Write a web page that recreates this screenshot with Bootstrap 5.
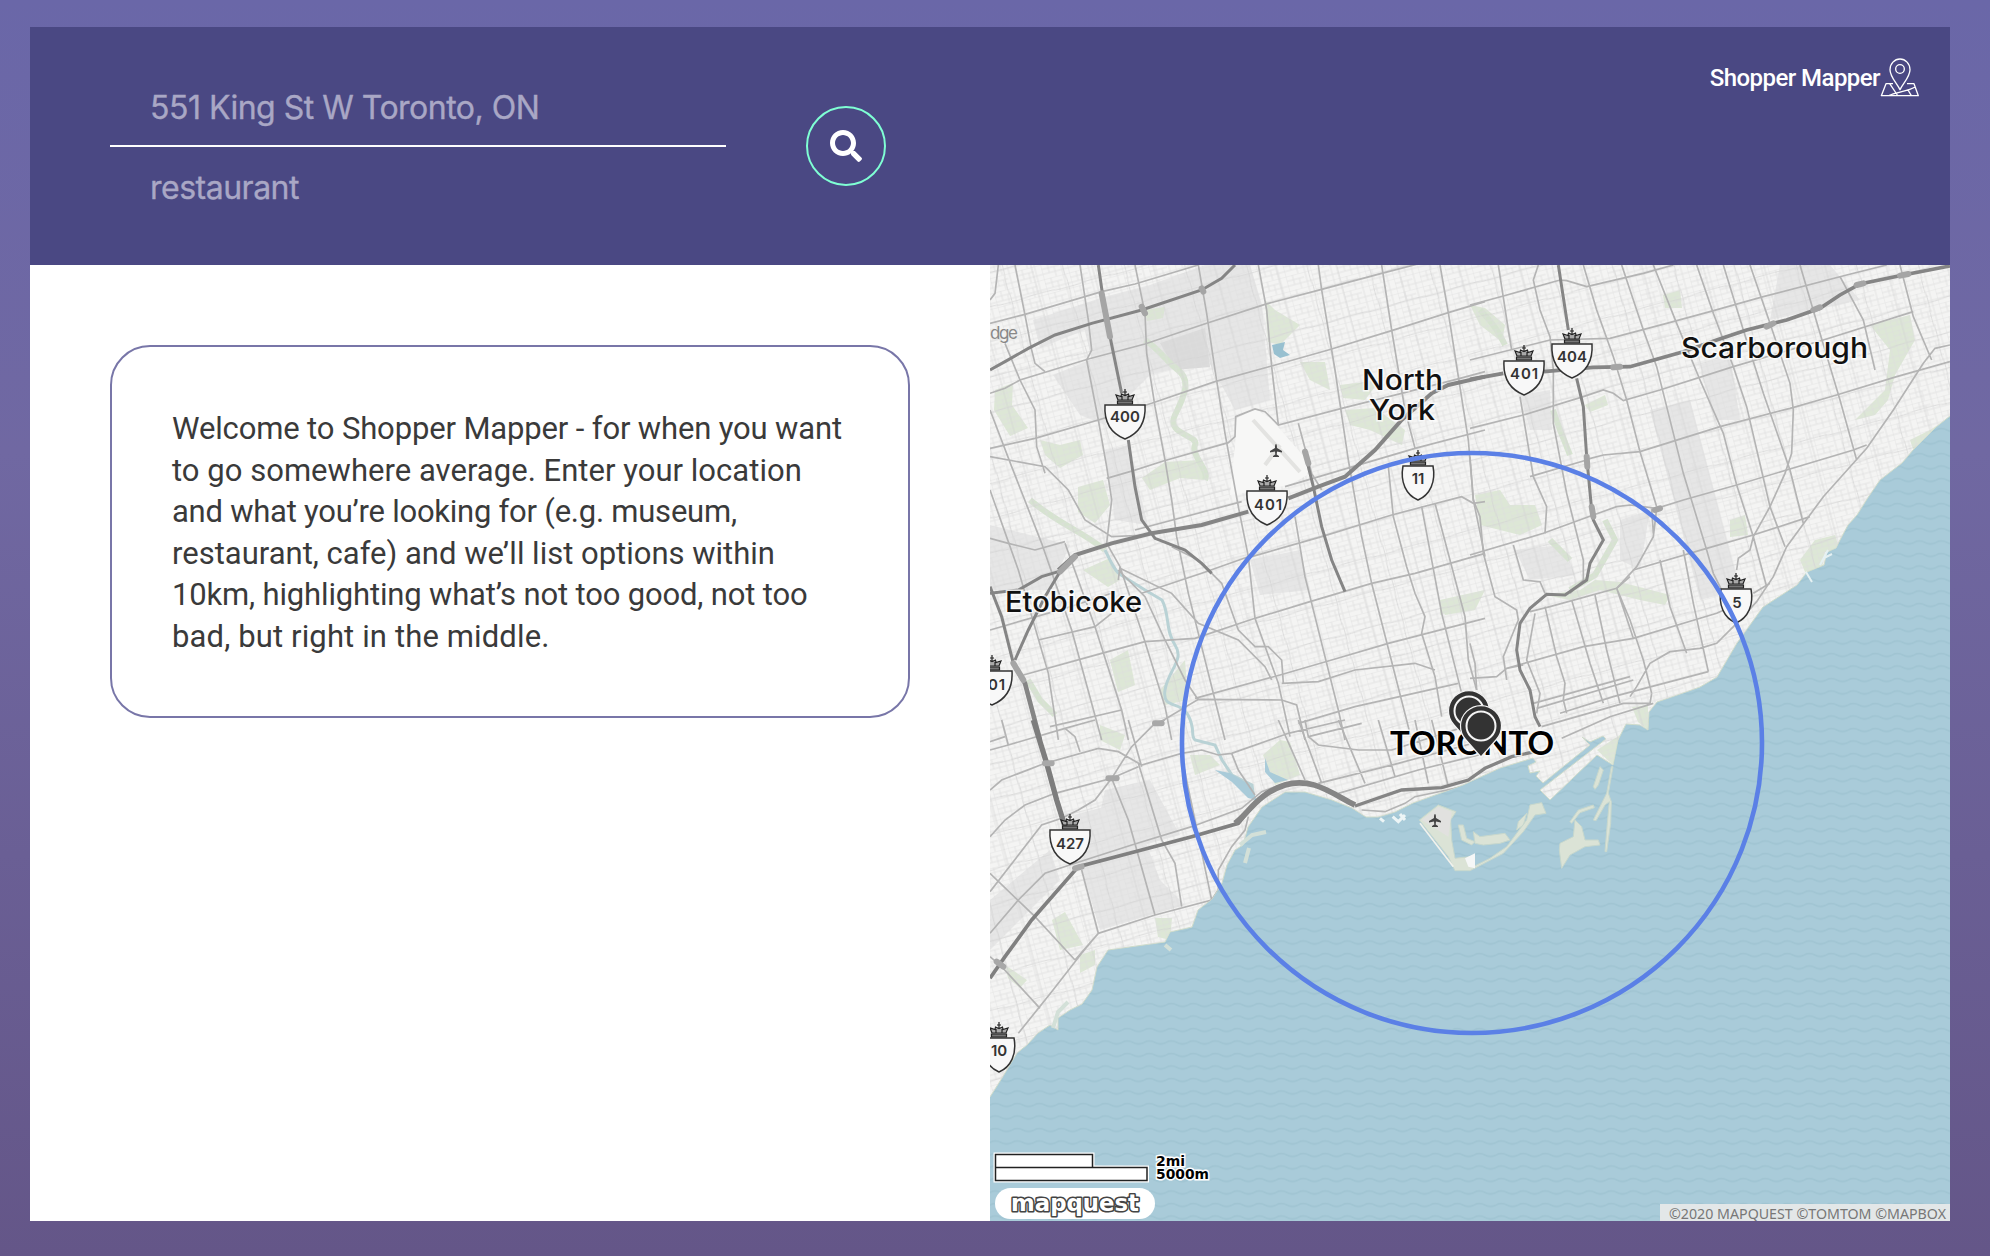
<!DOCTYPE html>
<html lang="en">
<head>
<meta charset="utf-8">
<title>Shopper Mapper</title>
<link href="https://cdn.jsdelivr.net/npm/bootstrap@5.3.0/dist/css/bootstrap.min.css" rel="stylesheet">
<style>
body{min-height:1256px;margin:0;background:linear-gradient(#6a67a8 0%,#7068a2 36%,#645688 100%);overflow:hidden;font-family:Roboto,"Liberation Sans",sans-serif}
.shell{margin:27px 40px 35px 30px;height:1194px;background:#fff}
.topbar{height:238px;background:#4a4883;padding:40px 30px 0 80px}
.fields{width:616px}
.fields .form-control{height:80px;border:0;border-radius:0;background:transparent;color:#fff;font:400 32px/1.2 Inter,sans-serif;letter-spacing:-.5px;padding:0 40px;-webkit-text-stroke:.35px #a9a7c5}
.fields .form-control::placeholder{color:#a9a7c5;opacity:1}
.fields .rule-line{border-bottom:2px solid #fff;padding-top:2px}
.find{width:80px;height:80px;margin:39px 0 0 80px;border:2px solid #7fffd4;border-radius:50%;background:transparent}
.brand{color:#fff;font-size:24px;font-weight:500;line-height:36px;margin-top:-10px}
.brand span{letter-spacing:-.55px;white-space:nowrap}
.pane{width:960px;height:956px}
.welcome{margin:80px 80px 0;height:373px;border:2px solid #7876a8;border-radius:40px;padding:61px 60px 59px}
.welcome p{margin:0;color:#3a3a3a;font-size:31px;line-height:41.6px;white-space:nowrap}
.welcome span{display:block}
.l1{letter-spacing:-.14px}.l2{letter-spacing:.03px}.l3{letter-spacing:-.24px}.l5{letter-spacing:-.16px}.l6{letter-spacing:.13px}
.mapart{display:block}
</style>
</head>
<body>
<main class="shell d-flex flex-column">
<header class="topbar d-flex align-items-start">
  <form class="fields d-flex flex-column">
    <input class="form-control rule-line" type="text" placeholder="551 King St W Toronto, ON" aria-label="Location">
    <input class="form-control" type="text" placeholder="restaurant" aria-label="Search">
  </form>
  <button class="find btn p-0 d-flex align-items-center justify-content-center" type="button" aria-label="Search">
    <svg width="32" height="32" viewBox="0 0 512 512" fill="#fff"><path d="M505 442.700 405.300 343c-4.500-4.500-10.600-7-17-7H372c27.600-35.300 44-79.700 44-128C416 93.100 322.900 0 208 0S0 93.100 0 208s93.100 208 208 208c48.300 0 92.700-16.400 128-44v16.300c0 6.400 2.500 12.500 7 17l99.700 99.700c9.400 9.400 24.600 9.400 33.900 0l28.300-28.300c9.400-9.400 9.400-24.600.1-34zM208 336c-70.700 0-128-57.200-128-128 0-70.700 57.200-128 128-128 70.700 0 128 57.200 128 128 0 70.700-57.200 128-128 128z"/></svg>
  </button>
  <div class="brand d-flex align-items-center ms-auto">
    <span>Shopper Mapper</span>
    <svg width="40" height="42" viewBox="0 0 120 126" fill="none" stroke="#fff" stroke-width="4" stroke-linejoin="round"><path d="M60 98C52 80 30 60 30 38a30 32 0 0 1 60 0c0 22-22 42-30 60Z"/><circle cx="60" cy="36" r="13"/><path d="M39 80H18L4 116H115L102 80H81M29 80l23 34M28 115C45 106 88 102 106 89M84 99l10 17"/></svg>
  </div>
</header>
<section class="d-flex">
<div class="pane">
  <div class="welcome"><p>
    <span class="l1">Welcome to Shopper Mapper - for when you want</span>
    <span class="l2">to go somewhere average. Enter your location</span>
    <span class="l3">and what you’re looking for (e.g. museum,</span>
    <span class="l4">restaurant, cafe) and we’ll list options within</span>
    <span class="l5">10km, highlighting what’s not too good, not too</span>
    <span class="l6">bad, but right in the middle.</span>
  </p></div>
</div>
<div class="pane">
<svg class="mapart" width="960" height="956" viewBox="990 265 960 956">
<defs>
<pattern id="waves" width="22" height="12.500" patternUnits="userSpaceOnUse"><path d="M0 5Q5.500 2 11 5T22 5" fill="none" stroke="#a0c4d2" stroke-width="1.700"/></pattern>
<pattern id="blocks" width="26" height="15" patternUnits="userSpaceOnUse" patternTransform="rotate(-15)"><path d="M0 0H26M0 5H18M0 10H26M0 0V15M7 0V10M13 5V15M20 0V15" fill="none" stroke="#dedede" stroke-width=".9"/></pattern>
<pattern id="lanes" width="59" height="34" patternUnits="userSpaceOnUse" patternTransform="rotate(-15)"><path d="M0 9C18 12 36 6 59 9M14 0C16 12 12 22 14 34M42 0V34" fill="none" stroke="#d2d2d2" stroke-width=".9"/></pattern>
<clipPath id="ground"><use href="#coast"/></clipPath>
<g id="crown"><path d="M-7.500 -20H7.500V-23H-7.500Z" fill="#777" stroke="#222" stroke-width="1.200"/><path d="M-7-24L-9-29L-4-27.500L-3.500-30L0-28.500L3.500-30L4-27.500L9-29L7-24ZM0-29V-35M-2-32H2M-3-24V-28M3-24V-28" fill="#aaa" stroke="#222" stroke-width="1.200"/></g>
<g id="shield"><use href="#crown"/><path d="M-20-19H20C21-3 15 9 0 15C-15 9-21-3-20-19Z" fill="#f8f8f8" stroke="#333" stroke-width="1.500"/></g>
<g id="shield-s"><use href="#crown"/><path d="M-15-19H15C18-3 12 10 0 15C-12 10-18-3-15-19Z" fill="#f8f8f8" stroke="#333" stroke-width="1.500"/></g>
<path id="plane" d="M0-6C1-6 1-3 1-2L6 1V2.500L1 1.500L.7 4.500L3 6V7H-3V6L-.7 4.500L-1 1.500L-6 2.500V1L-1-2C-1-3-1-6 0-6Z" fill="#444"/>
<g id="pin"><path d="M0 31L-15 14A20.500 20.500 0 1 1 15 14Z" fill="#333" stroke="#f5f5f5" stroke-width="1.200"/><circle r="14.500" fill="#333" stroke="#f5f5f5" stroke-width="2"/></g>
</defs>
<rect x="990" y="265" width="960" height="956" fill="#a9cbd9"/>
<rect x="990" y="265" width="960" height="956" fill="url(#waves)"/>
<path id="coast" fill="#f4f4f3" stroke="#cfdcc9" stroke-width="1" d="M980 255H1960V408L1950 416L1936 427L1913 450L1902 463L1880 480L1867 499L1857 515L1848 525L1840 540L1836 548L1827 552L1824 565L1807 572L1797 585L1763 607L1750 625L1737 643L1717 677L1700 687L1683 693L1657 702L1649 712L1648 730L1640 725L1626 724L1618 740L1613 765L1597 755L1550 800L1540 790L1606 739L1603 736L1590 742L1582 737L1590 745L1543 783L1536 776L1540 771L1530 773L1528 766L1536 762L1533 758L1500 768L1463 785L1413 803L1395 812L1378 817L1366 817L1352 808L1332 800L1305 792L1285 792L1262 807L1248 827L1243 845L1235 850L1227 865L1222 883L1212 899L1198 910L1192 927L1170 932L1165 942L1108 950L1097 967L1092 990L1082 1004L1070 1010L1058 1018L1058 1030L1050 1025L1038 1033L1027 1045L1017 1053L1002 1078L990 1097L980 1100Z"/>
<g clip-path="url(#ground)">
<g fill="#e6e6e6">
<path d="M1033 320L1104 297L1150 285L1205 265H1250L1262 305L1270 400L1235 410L1208 360L1150 375L1105 420L1085 330L1040 348ZM1053 375L1095 358L1105 425L1080 415ZM1105 450L1128 445L1148 525L1115 520ZM990 525L1070 545L1050 590L990 590ZM1075 815L1130 800L1160 880L1185 905L1100 930L1082 870L1060 860ZM1105 790L1150 780L1180 835L1090 860ZM1250 560L1300 550L1310 590L1260 595ZM1780 265L1830 265L1860 300L1770 320ZM1650 410L1690 400L1740 590L1700 600ZM1700 365L1730 355L1740 420L1715 420ZM1515 550L1560 545L1575 575L1530 580ZM1520 395L1550 390L1552 430L1530 430ZM1620 520L1650 510L1640 570L1620 560ZM990 900L1050 850L1060 880L990 950Z"/>
</g>
<path d="M1160 343L1205 328L1210 367L1175 370Z" fill="#dadada"/>
<g fill="#d8e4d0" opacity=".85">
<path d="M995 390L1013 383L1012 405L1028 428L1010 436L994 410ZM1040 440L1060 445L1080 440L1083 455L1060 468L1045 455ZM1078 487L1103 480L1110 505L1095 523L1078 512ZM1142 478L1165 462L1200 460L1204 480L1180 478L1150 490ZM1083 570L1110 558L1120 580L1108 587ZM1110 660L1128 650L1135 685L1118 692ZM1265 300L1275 310L1300 325L1280 345L1268 342ZM1300 362L1325 362L1330 390L1310 380ZM1340 385L1380 380L1365 400L1343 398ZM1345 410L1375 408L1405 430L1402 445L1370 430L1350 425ZM1280 740L1290 742L1300 775L1275 785L1263 755ZM1100 725L1125 735L1120 750L1100 740ZM1052 920L1065 912L1083 945L1060 950ZM1155 918L1172 918L1170 940L1158 937ZM1080 955L1095 950L1095 965L1080 973ZM1005 965L1027 980L1020 988L1008 978ZM1190 755L1210 755L1220 765L1195 775ZM1475 495L1500 490L1510 505L1535 505L1542 525L1520 535L1480 525ZM1470 305L1485 308L1505 325L1502 342L1480 325ZM1870 325L1910 315L1915 340L1895 375L1888 400L1875 415L1855 420L1885 390L1890 350ZM1663 295L1680 290L1682 308L1665 308ZM1730 520L1745 515L1748 535L1730 537ZM1800 560L1815 540L1835 535L1840 552L1825 552L1822 568L1805 572ZM1585 405L1605 395L1608 405L1590 412ZM1545 595L1580 590L1595 580L1620 582L1670 595L1665 605L1640 600L1600 590L1570 600ZM1440 600L1485 590L1480 600L1440 615ZM1910 440L1930 430L1950 417L1915 455ZM1632 707L1648 705L1648 730L1638 722ZM1597 750L1620 735L1613 765ZM1145 310L1165 307L1163 318L1147 321ZM1440 605L1485 590L1475 610L1445 615ZM1160 690L1185 660L1188 700L1165 705Z"/>
</g>
<path d="M1145 340C1160 350 1165 360 1178 370S1185 395 1175 415S1200 435 1195 445S1210 470 1205 480M1030 500C1060 525 1080 530 1105 550M1480 310C1495 325 1500 335 1505 345M1553 410L1560 430L1570 455M1605 520L1615 540L1595 575L1570 590M1550 540L1570 560M1028 680L1040 700L1055 715" fill="none" stroke="#d6e3d0" stroke-width="6"/>
<rect x="990" y="265" width="960" height="840" fill="url(#blocks)" opacity=".8"/>
<rect x="990" y="265" width="960" height="840" fill="url(#lanes)" opacity=".75"/>
<path d="M1272 345L1285 342L1283 350L1290 355L1280 358L1274 354Z" fill="#98c0d0"/>
<path d="M1105 550C1110 560 1115 572 1121 575L1145 590L1162 600C1170 615 1165 630 1175 645S1168 670 1165 690S1180 700 1188 715S1190 735 1195 740L1215 745L1222 760L1232 775L1252 785L1254 800" fill="none" stroke="#b9d2d5" stroke-width="3"/>
<path d="M1215 770L1230 773L1250 785L1257 800L1248 798L1232 782ZM1265 758L1270 772L1288 780L1275 783L1265 772Z" fill="#a9cbd9"/>
<path d="M1235 445L1237 418L1255 409L1270 418L1307 460L1307 475L1290 485L1230 495Z" fill="#f7f7f6"/><path d="M1253 420L1300 472M1265 465L1280 445" stroke="#e3e3e1" stroke-width="4"/>
<!-- roads of the western half -->
<g transform="translate(985 260) scale(.33333)" fill="none" stroke="#b4b4b4" stroke-width="5">
<path d="M15 190L120 163L350 95L450 72L640 15M15 400L60 385L105 360L310 297L480 252L665 190L840 133L1010 88L1190 40L1500-40M15 565L150 535L340 480L500 430L690 365L860 318L1030 270L1220 212L1390 158L1500 125M365 655L445 632L535 603L730 548L750 530L752 470L810 447L840 455L880 495L1070 445L1250 400L1425 355L1500 335M450 810L770 725M900 680L1290 565L1500 510M15 835L70 850L150 870L240 845M800 890L1010 830L1220 765L1430 710L1465 730L1500 725M470 1000L650 940L790 890M15 1110L240 1045L380 1000M160 1140L330 1100L380 1060M115 1245L350 1180L480 1145L630 1135L810 1075L975 1025L1160 970L1290 940L1500 880M630 1315L885 1245L1040 1200L1210 1150L1500 1075M195 1400L410 1350M15 1445L60 1430M520 1390L640 1318L890 1320L935 1335L960 1440M890 1270L1000 1265L1110 1230L1290 1210L1350 1230M940 1390L1110 1340L1420 1270"/>
<path d="M90 15L120 165L140 270L150 310L180 335M60 250L105 360L150 450L155 560L180 640M285 15L310 180L320 270L305 300L340 480L365 620L380 720L365 850L405 920L400 960M450 15L480 160L485 280L510 440L540 600L560 720L575 830L610 1000L640 1120L660 1200L720 1440M640 15L665 160L690 330L720 520L760 740L790 890L810 1075L880 1270L915 1430M820 15L845 150L860 320L880 495M1000 15L1010 90L1050 330L1090 600M1190 15L1220 210L1260 450L1290 565M1365 15L1390 158L1420 350L1450 540L1465 720L1500 890M15 450L80 620L170 850L260 1110L350 1440M15 690L100 930L190 1240L220 1440M240 850L330 1100L410 1350L430 1440M405 920L480 1145L540 1340L560 1440M930 770L960 950L1060 1350L1080 1440M1090 600L1130 830L1160 970L1280 1440M1210 620L1225 770L1265 920L1290 1000L1320 1070L1310 1120L1350 1250L1370 1370M1310 740L1370 1060L1430 1300M1350 730L1440 1070L1450 1200L1475 1290M15 590L180 620L250 690L300 780L380 830L490 825M560 860L640 900L710 970L760 1110L810 1160L850 1160L890 1200L895 1270M400 930L480 1010L540 1140L600 1260L640 1320M405 925L560 1000L640 1090L760 1140L840 1220L860 1260M40 15L30 100L15 120M940 490L980 640L1010 690"/>
<g stroke="#858585" stroke-width="9"><path d="M15 330L60 305L130 265L210 225L320 190L470 150L650 90L710 55L750 15M340 15L355 120L375 230L410 400M430 540L450 680L470 780L510 835L600 870L650 910L680 940M15 1000L100 990L170 950L220 935M15 980L50 1070L85 1210M225 935L180 1010L130 1110L90 1200M960 580L985 680L1010 800L1040 900L1080 995"/></g>
<g stroke="#858585" stroke-width="12"><path d="M220 930L270 885L380 850L500 820L650 795L790 755M910 715L1000 680L1080 650L1170 570L1250 480L1340 400L1390 375L1500 350"/><path d="M85 1210L120 1270L165 1440" stroke-width="14"/></g>
<path d="M225 935L270 890M350 100L375 230M960 575L970 610M650 85L655 95M470 140L480 160M85 1210L115 1260" stroke="#a5a5a5" stroke-width="18" stroke-linecap="round"/>
</g>
<!-- roads of the eastern half -->
<g transform="translate(1470 260) scale(.33333)" fill="none" stroke="#b4b4b4" stroke-width="5">
<path d="M0 135L100 108L270 60L290 62L350 80L520 40L610 15M0 300L240 240L420 235L590 190L720 155L880 110L1130 45L1250 15M0 505L160 465L340 410L400 390L430 400L460 422L570 390L790 320L1060 240L1330 155M350 598L400 585L510 575L750 500L960 445L1100 405L1280 350L1440 305M180 650L350 600M0 885L220 820L370 765L440 740L480 735L560 745L640 720L800 675L950 630L1150 570L1190 555M490 930L710 865L850 825L1020 770M180 1055L240 1040L440 985L480 950M490 1135L740 1060L830 1020M110 1225L340 1160L490 1135M0 1255L80 1250L110 1225L160 1215M270 1360L430 1310L715 1235M215 1400L460 1330L540 1330L545 1300M200 1345L490 1260M850 1000L900 970M275 1435L420 1370L550 1330M190 1330L480 1250"/>
<path d="M85 15L115 210L125 270M150 410L190 650L230 740L225 820M205 15L190 60L210 150L240 230L250 330L250 490L290 700L340 900L340 960L300 1000M340 15L380 150L430 290L470 420L510 575L560 740M455 15L520 210L560 320L590 440L640 640L710 870L730 940L760 1000M550 15L620 190L690 360L760 520L800 675L850 830L890 980M680 15L730 160L790 320L830 440L900 740L945 860M760 15L820 210L880 400L960 630L1000 790M840 15L900 190L960 370L970 450L965 580L945 640L900 740L850 830L840 870L805 895L800 930M990 15L1050 220L1110 420L1160 600M1290 15L1330 170L1385 300M1110 50L1180 180L1215 330M0 590L10 720L30 770L40 880L75 1010L140 1050L145 1080L100 1190L110 1260M130 855L160 960L210 965L225 1000M560 745L550 830L500 920L440 985L480 1080L520 1200L545 1300M225 1040L260 1190L285 1270L280 1320L290 1360M375 1005L410 1170L450 1330M305 1020L360 1210L400 1330M570 900L600 1040L650 1180M640 870L670 1030L715 1235M440 985L490 1135M550 820L545 745M195 1060L170 1200L210 1300L200 1360M1440 255L1395 265L1360 310L1270 450L1190 565L1060 710L950 860L910 950L860 1025L800 1090L740 1150L690 1165L600 1175L540 1210L500 1280L480 1310M0 1150L15 1210L20 1290"/>
<g stroke="#858585" stroke-width="11"><path d="M0 358L100 340M220 335L370 322L480 320L560 298L640 275L740 240L830 210L950 180L1050 145L1110 105L1170 72L1300 45L1440 18"/><path d="M265 15L295 210M320 355L340 440L350 590L365 750L370 780L400 840L360 910L350 960L285 1005L230 1003L180 1045L150 1090L140 1170L150 1230L180 1290L195 1370L210 1400" stroke-width="9"/></g>
<path d="M890 200L910 190M1030 150L1050 142M1160 75L1180 70M1290 47L1315 42M365 740L370 770M350 590L352 620M555 750L570 745M430 322L450 320" stroke="#a5a5a5" stroke-width="18" stroke-linecap="round"/>
</g>
<!-- south-west corner and the lake shore -->
<g transform="translate(985 720) scale(.33333)" fill="none" stroke="#b4b4b4" stroke-width="5">
<path d="M15 210L50 180L180 130L340 85L400 95L470 135L590 100L650 90L700 105L740 100L910 40L1080 0M15 350L60 300L120 255L210 220L380 175L460 140M15 90L70 75L240 25L330 0M15 515L170 315L230 295L280 270L330 240L380 175L440 80L510 10L540 0M15 640L100 540L180 460L270 430L440 375L620 320L770 265L830 215L900 190M70 75L50 0M240 25L270 50L285 95M15 460L150 590L270 720M15 710L50 740L165 865M340 640L290 700L200 815L100 940M290 450L340 640L510 585L680 540L700 510L700 450L740 380L780 330L790 290M270 720L340 640M380 175L430 300L510 585M460 130L530 360L570 430L590 560M590 110L680 540M740 100L760 150L810 225M430 0L470 140M880 0L960 180M940 0L1010 190M1060 0L1140 190M1180 0L1230 170M1290 0L1330 190M1340 0L1390 200M970 50L1000 75L1120 90L1220 90L1440 20M960 0L970 50L1130 10M1000 190L1240 130L1500 60M1060 220L1300 150L1500 100M1130 270L1200 275L1260 250L1290 230L1480 190"/>
<path d="M145 0L185 130L215 240L240 320" stroke="#7d7d7d" stroke-width="16"/>
<path d="M15 775L60 710L140 600L280 440L450 395L620 350L760 310L810 250" stroke="#808080" stroke-width="11"/>
<path d="M750 310C790 280 820 220 900 195S1040 220 1110 255" stroke="#858585" stroke-width="17"/><path d="M1110 258L1250 210L1370 203L1450 180L1500 145L1580 110L1650 95" stroke="#858585" stroke-width="10"/>
<path d="M370 175H395M510 10H530M35 725L55 740M180 130L200 130M270 445L290 440" stroke="#a8a8a8" stroke-width="18" stroke-linecap="round"/>
</g>
</g>
<!-- harbour and islands -->
<g transform="translate(1380 670) scale(.33333)">
<path d="M118 450L175 405L228 425L212 450L215 510L225 565L270 560L280 590L330 565L380 530L440 450L450 405L485 398L498 430L465 435L430 485L370 550L270 602H225L205 560ZM235 465L250 465L260 505L285 515L275 525L245 510ZM280 485L300 500L375 490L390 510L360 520L310 525L285 520ZM410 480L415 455L440 430L430 465ZM540 520L580 500L585 450L605 470L615 510L655 510L660 525L615 530L570 555L545 595L538 540ZM640 350L660 290L670 300L655 345L645 358ZM694 290L680 370L665 400L640 450L648 452L675 405L688 395L682 460L675 545L680 545L692 460L694 395L685 370L699 290ZM570 455L595 420L640 405L643 413L600 428L575 460Z" fill="#dbe3d6" stroke="#c8d8cd" stroke-width="3"/>
<path d="M125 450L175 410L215 425L205 500Z" fill="#e1e1df"/><path d="M255 565L285 550L285 595L265 590Z" fill="#f5f7f7"/>
<path d="M120 460L220 590" fill="none" stroke="#f2f2ec" stroke-width="5"/>
<path d="M0 445L12 455M38 440L55 455L75 435M60 432L75 450" fill="none" stroke="#edf5f6" stroke-width="9"/>
</g>
<path d="M1240 845L1252 835L1266 832M1245 863L1249 848M1053 1028L1058 1012L1068 1002M1165 945L1171 950" fill="none" stroke="#d3e0d8" stroke-width="4"/>
<path d="M1820 565L1828 550M1824 558L1832 554M1806 572L1812 582" fill="none" stroke="#e5f1f3" stroke-width="2"/>
<!-- place names -->
<g font-family="Inter,Lato,sans-serif" font-weight="500" fill="#111" stroke="#fff" stroke-width="3" stroke-opacity=".75" paint-order="stroke" font-size="28">
<text x="1362" y="390" textLength="81" lengthAdjust="spacingAndGlyphs">North</text>
<text x="1369" y="420" textLength="66" lengthAdjust="spacingAndGlyphs">York</text>
<text x="1681" y="358" textLength="187" lengthAdjust="spacingAndGlyphs">Scarborough</text>
<text x="1005" y="612" textLength="137" lengthAdjust="spacingAndGlyphs">Etobicoke</text>
<text x="1390" y="755" textLength="164" lengthAdjust="spacingAndGlyphs" font-size="32" font-weight="700" font-family="Lato,sans-serif" fill="#000">TORONTO</text>
</g>
<text x="990" y="339" font-family="Inter,sans-serif" font-size="17" fill="#888" textLength="28">dge</text>
<use href="#plane" x="1276" y="450"/><use href="#plane" x="1435" y="820"/>
<!-- route shields -->
<g font-family="Inter,sans-serif" font-weight="600" font-size="15" fill="#333" text-anchor="middle">
<use href="#shield" x="1125" y="424"/><text x="1125" y="422" textLength="30">400</text>
<use href="#shield" x="1267" y="510"/><text x="1268" y="510" textLength="28">401</text>
<use href="#shield" x="1524" y="380"/><text x="1524" y="379" textLength="28">401</text>
<use href="#shield" x="1572" y="363"/><text x="1572" y="362" textLength="30">404</text>
<use href="#shield" x="1070" y="849"/><text x="1070" y="849" textLength="28">427</text>
<use href="#shield" x="992" y="690"/><text x="991" y="690" textLength="28">401</text>
<use href="#shield-s" x="1418" y="485"/><text x="1418" y="484">11</text>
<use href="#shield-s" x="1736" y="608"/><text x="1737" y="608">5</text>
<use href="#shield-s" x="999" y="1057"/><text x="999" y="1056">10</text>
</g>
<circle cx="1472" cy="743" r="290" fill="none" stroke="#5b80e6" stroke-width="4.600"/>
<use href="#pin" x="1469" y="711"/><use href="#pin" x="1481" y="726"/>
<!-- scale and credits -->
<path d="M995.500 1154.500H1092.500V1167.500H1147V1180.500H995.500ZM995.500 1167.500H1092.500" fill="#fff" stroke="#fff" stroke-width="4"/>
<path d="M995.500 1154.500H1092.500V1167.500H1147V1180.500H995.500ZM995.500 1167.500H1092.500" fill="#fff" stroke="#222" stroke-width="1.500"/>
<g font-family="DejaVu Sans,sans-serif" font-weight="700" font-size="14.500" fill="#000" stroke="#fff" stroke-width="3" paint-order="stroke"><text x="1156" y="1166" textLength="29" lengthAdjust="spacingAndGlyphs">2mi</text><text x="1156" y="1179" textLength="53" lengthAdjust="spacingAndGlyphs">5000m</text></g>
<rect x="995" y="1188" width="160" height="31" rx="15.500" fill="#fff"/>
<text x="1011" y="1211" font-family="DejaVu Sans,sans-serif" font-weight="700" font-size="23" textLength="128" lengthAdjust="spacingAndGlyphs" fill="#fff" stroke="#444" stroke-width="3.200" stroke-linejoin="round" paint-order="stroke">mapquest</text>
<rect x="1660" y="1204" width="290" height="17" fill="#e3e7e8"/>
<text x="1669" y="1219" font-family="Noto Sans,sans-serif" font-size="14.500" fill="#777" textLength="277" lengthAdjust="spacingAndGlyphs">©2020 MAPQUEST ©TOMTOM ©MAPBOX</text>
</svg>
</div>
</section>
</main>
<script src="https://cdn.jsdelivr.net/npm/bootstrap@5.3.0/dist/js/bootstrap.bundle.min.js"></script>
</body>
</html>
